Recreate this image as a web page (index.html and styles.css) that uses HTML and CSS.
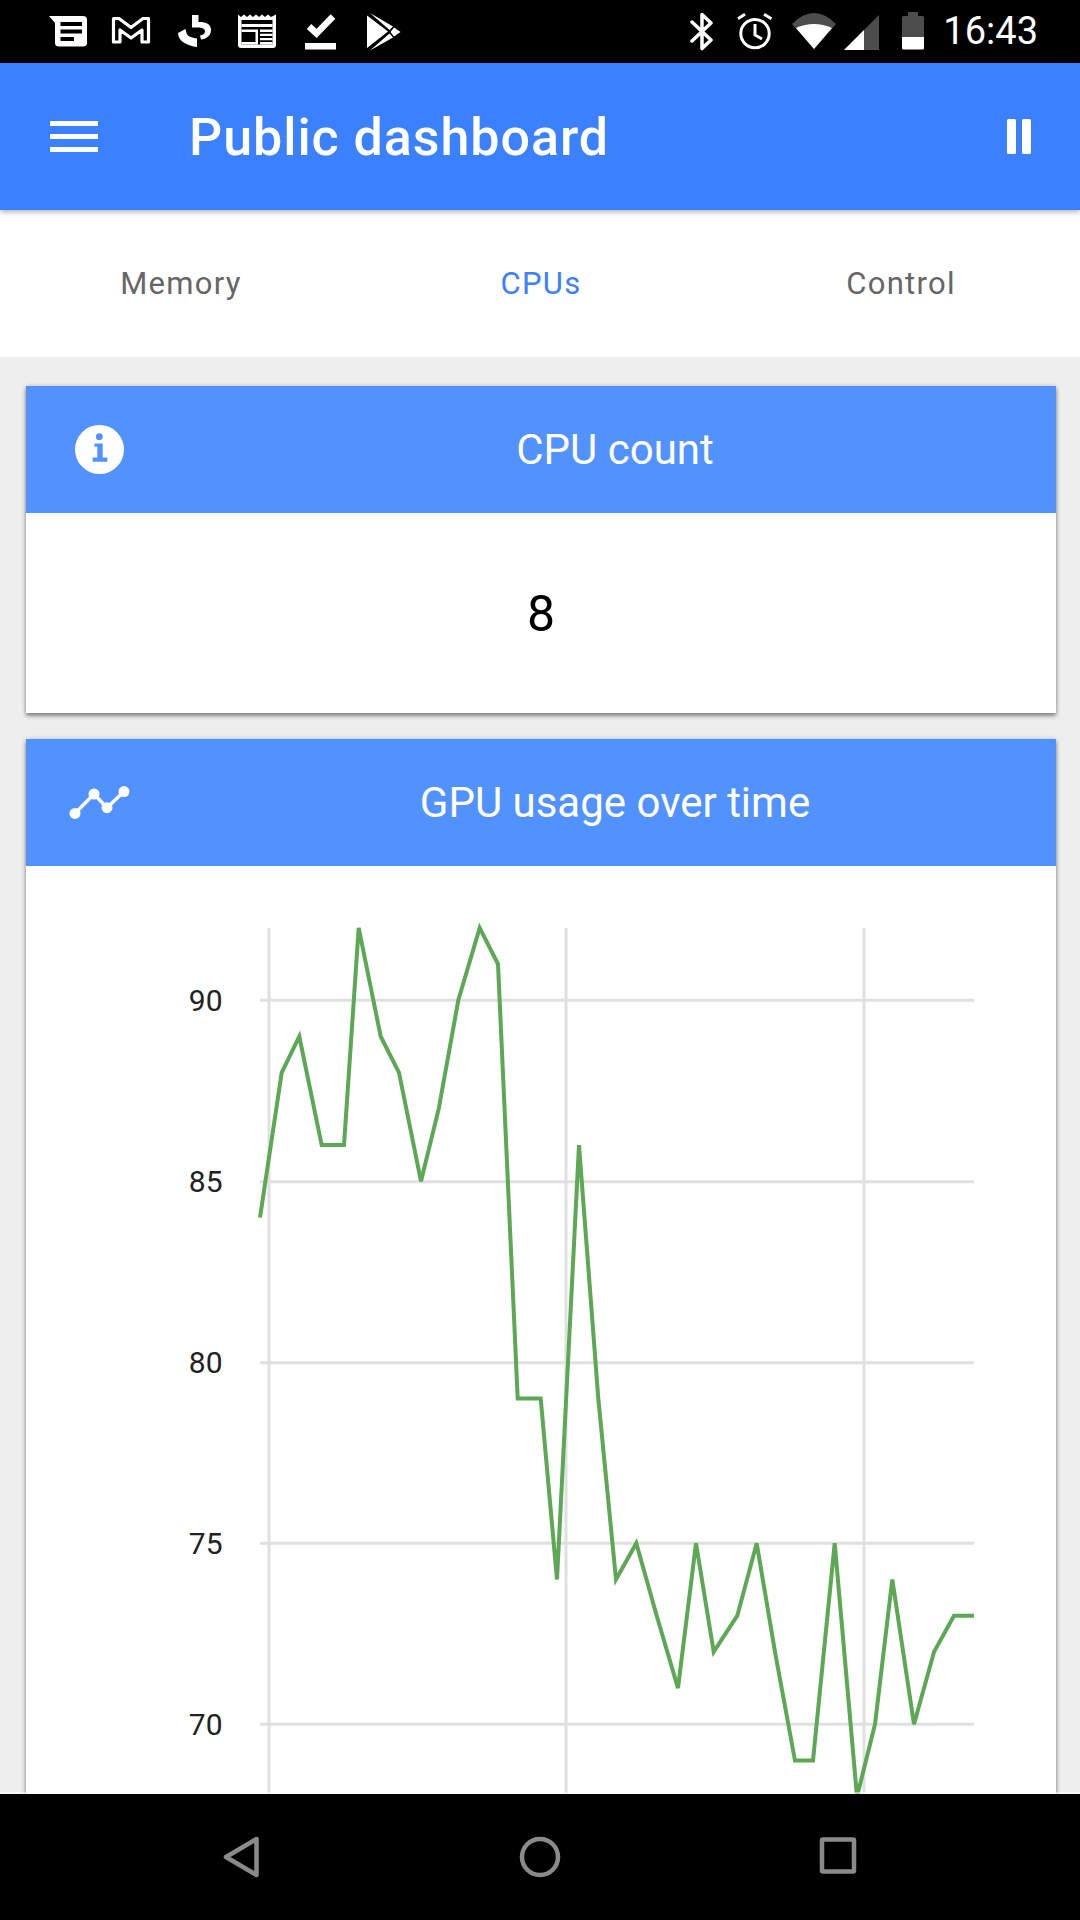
FILE: index.html
```html
<!DOCTYPE html>
<html lang="en">
<head>
<meta charset="utf-8">
<title>Public dashboard</title>
<link rel="stylesheet" href="styles.css">
</head>
<body>
<div class="screen">
  <div class="status">
    <div class="notifs">
      <svg class="slot" viewBox="37 0 63 63"><path class="w" d="M49 16H83Q87 16 87 20V43Q87 46.500 83 46.500H59Q55 46.500 55 43V23Z"/><path class="k" d="M60.500 22H82V26H60.500ZM60.500 29.500H82V33.500H60.500ZM60.500 37H74V41H60.500Z"/></svg>
      <svg class="slot" viewBox="100 0 63 63"><path class="ol" d="M113.500 18.500H119L131 27.500L143 18.500H148.500V42H142V30L131 38L120 30V42H113.500Z"/></svg>
      <svg class="slot" viewBox="163 0 63 63"><path class="w" d="M192 15H198.500V22C205 22 211 23.500 211 30C211 36 206 39 201 39.500L200 35.500C203 35.200 205 33.500 205 31.500C205 28.500 202 27.500 198 27.500H192Z"/><path class="w" d="M185.500 29L186.500 33C187 36 192 38 197 38.500V47C188 46 178 41.500 178 33Z"/></svg>
      <svg class="slot" viewBox="226 0 63 63"><path class="w" d="M238 14.500L241 17L244 14.500L247 17L250 14.500L253 17L256 14.500L259 17L262 14.500L265 17L268 14.500L271 17L276 14.500V45Q276 48 273 48H241Q238 48 238 45Z"/><path class="k" d="M241.500 20H272.500V44.500H241.500Z"/><path class="w" d="M241.500 24H272.500V27H241.500ZM241.500 29.500H257V32H241.500ZM241.500 42H257V44.500H241.500ZM255.500 29.500H258V44.500H255.500ZM260 29.500H272.500V32H260ZM260 33.700H272.500V36H260ZM260 38H272.500V40.200H260ZM260 42H272.500V44.500H260Z"/></svg>
      <svg class="slot" viewBox="289 0 63 63"><path class="w" d="M305 43H336V49.500H305Z"/><path class="st" d="M309 26.500L316.500 33.500L333 16.500"/></svg>
      <svg class="slot" viewBox="352 0 63 63"><path class="w" d="M367 15.500L388 31.500L367 48Z"/><path class="w" d="M370 13L393 26.500L389.500 30ZM370 50.500L393 37.500L389.500 33.500Z"/><path class="w" d="M394 27.500L400.500 32L394 36.500L390.500 32Z"/></svg>
    </div>
    <div class="sysicons">
      <svg class="bt" viewBox="690 0 24 63"><path class="bts" d="M692 22L711 40L702 48.500V14.500L711 23L692 41"/></svg>
      <svg class="alarm" viewBox="737 0 36 63"><circle class="ths" cx="755" cy="33.600" r="14.200"/><path class="ths" d="M755 24V35L762 39M738 18.700L745 14.300M764 14.300L771.500 18.700"/></svg>
      <svg class="wifi" viewBox="792 0 44 63"><path class="g" d="M814 49L792 24Q814 2 836 24Z"/><path class="w" d="M814 49L796 28Q814 20 832 28Z"/></svg>
      <svg class="signal" viewBox="844 0 35 63"><path class="g" d="M844 50L879 15V50Z"/><path class="w" d="M844 50L864 30V50Z"/></svg>
      <svg class="battery" viewBox="902 0 22 63"><path class="g" d="M908 12H918V16H922.500Q924 16 924 17.500V37H902V17.500Q902 16 903.500 16H908Z"/><path class="w" d="M902 37H924V48Q924 49.500 922.500 49.500H903.500Q902 49.500 902 48Z"/></svg>
      <span class="time">16:43</span>
    </div>
  </div>

  <header class="appbar">
    <div class="burger"><i></i><i></i><i></i></div>
    <h1 class="title">Public dashboard</h1>
    <div class="pause"><i></i><i></i></div>
  </header>

  <nav class="tabs">
    <a class="tab">Memory</a>
    <a class="tab active">CPUs</a>
    <a class="tab">Control</a>
  </nav>

  <main class="content">
    <section class="card">
      <div class="card-head">
        <svg class="card-icon" viewBox="0 0 148 127"><circle class="icw" cx="73.500" cy="63.500" r="24.500"/><circle class="icb" cx="73.300" cy="50.700" r="3.400"/><path class="icb" d="M68.500 57.500H76.700V71.500H81.300V75.700H66.700V71.500H71.300V60.700H68.500Z"/></svg>
        <h2 class="card-title">CPU count</h2>
      </div>
      <div class="count">8</div>
    </section>

    <section class="card">
      <div class="card-head">
        <svg class="card-icon" viewBox="0 0 148 127"><path class="icl" d="M49 74.400L68 55L81 68.700L98 52.600"/><circle class="icw" cx="49" cy="74.400" r="5.500"/><circle class="icw" cx="68" cy="55" r="5.500"/><circle class="icw" cx="81" cy="68.700" r="5.500"/><circle class="icw" cx="98" cy="52.600" r="5.500"/></svg>
        <h2 class="card-title">GPU usage over time</h2>
      </div>
      <svg class="chart" viewBox="26 866 1030 960">
        <path class="grid" d="M260 1000.300H974M260 1181.700H974M260 1362.700H974M260 1543.300H974M260 1724.300H974M269 928V1826M566 928V1826M864 928V1826"/>
        <text class="tick" x="222.500" y="1010.800">90</text>
        <text class="tick" x="222.500" y="1191.800">85</text>
        <text class="tick" x="222.500" y="1372.800">80</text>
        <text class="tick" x="222.500" y="1553.800">75</text>
        <text class="tick" x="222.500" y="1734.800">70</text>
        <polyline class="series" points="260,1217.500 281.700,1072.700 299.300,1036.500 321.700,1145.100 344,1145.100 358.700,927.900 380.700,1036.500 399,1072.700 421,1181.300 438.700,1108.900 458.300,1000.300 479.700,927.900 498,964.100 517.700,1398.500 540.700,1398.500 557,1579.500 579,1145.100 598.300,1398.500 616,1579.500 636.300,1543.300 656.700,1615.700 678,1688.100 696,1543.300 713.700,1651.900 737.300,1615.700 756.700,1543.300 775,1651.900 795,1760.500 813,1760.500 834.700,1543.300 857,1796.700 875,1724.300 892.300,1579.500 914,1724.300 934,1651.900 954,1615.700 974,1615.700"/>
      </svg>
    </section>
  </main>

  <footer class="navbar">
    <svg class="nav-icon" viewBox="0 0 1080 126"><path class="nv" d="M256.500 45V81L226 63Z"/><circle class="nv" cx="540" cy="63" r="18"/><rect class="nv" x="822" y="45.500" width="32" height="32" rx="1"/></svg>
  </footer>
</div>
</body>
</html>
```
FILE: styles.css
```css
* { box-sizing: border-box; }
html, body { margin: 0; padding: 0; }
body { font-family: Roboto, "Noto Sans", sans-serif; background: #000; }
.screen { width: 1080px; height: 1920px; display: flex; flex-direction: column; overflow: hidden; }

.status { height: 63px; flex: none; background: #000; display: flex; align-items: center; justify-content: space-between; padding-left: 37px; padding-right: 42px; }
.notifs { display: flex; }
.slot { width: 63px; height: 63px; display: block; }
.sysicons { display: flex; align-items: center; }
.sysicons svg { height: 63px; display: block; flex: none; }
.bt { width: 24px; margin-right: 23px; }
.alarm { width: 36px; margin-right: 19px; }
.wifi { width: 44px; margin-right: 8px; }
.signal { width: 35px; margin-right: 23px; }
.battery { width: 22px; margin-right: 19px; }
.time { color: #fff; font-size: 38px; line-height: 63px; }

.w { fill: #fff; }
.k { fill: #000; }
.g { fill: #4d4d4d; }
.ol { fill: none; stroke: #fff; stroke-width: 3.200; stroke-linejoin: round; }
.st { fill: none; stroke: #fff; stroke-width: 6.500; }
.bts { fill: none; stroke: #fff; stroke-width: 3.500; stroke-linecap: round; stroke-linejoin: round; }
.ths { fill: none; stroke: #fff; stroke-width: 3; }

.appbar { height: 147px; flex: none; background: #3b80ff; display: flex; align-items: center; padding-left: 50px; padding-right: 49px; position: relative; box-shadow: 0 2px 5px rgba(0, 0, 0, .3); }
.burger { width: 48px; margin-right: 91px; display: flex; flex-direction: column; gap: 8px; }
.burger i { display: block; height: 5px; background: #fff; }
.title { margin: 0; flex: 1; font-size: 52px; line-height: 60px; padding-top: 2px; font-weight: 500; color: #fff; letter-spacing: .95px; }
.pause { display: flex; gap: 6px; }
.pause i { display: block; width: 9px; height: 35px; background: #fff; border-radius: 1.500px; }

.tabs { height: 147px; flex: none; background: #fff; display: flex; }
.tab { flex: 1; display: flex; align-items: center; justify-content: center; padding-left: 2px; font-size: 31px; color: #666; letter-spacing: 1.300px; }
.tab.active { color: #3b80ff; }

.content { flex: 1; min-height: 0; background: #eee; overflow: hidden; padding: 29px 24px 0 26px; display: flex; flex-direction: column; gap: 26px; }
.card { flex: none; background: #fff; box-shadow: 0 3px 4px rgba(0, 0, 0, .4), 0 0 5px rgba(0, 0, 0, .18); }
.card-head { height: 127px; background: #5292ff; display: flex; align-items: center; }
.card-icon { width: 148px; height: 127px; flex: none; display: block; }
.card-title { margin: 0; flex: 1; text-align: center; font-size: 42px; font-weight: 400; color: #fff; }
.icw { fill: #fff; }
.icb { fill: #5292ff; }
.icl { fill: none; stroke: #fff; stroke-width: 3.500; }
.count { height: 200px; padding-top: 2px; display: flex; align-items: center; justify-content: center; font-size: 50px; color: #000; }

.chart { display: block; width: 1030px; height: 960px; }
.grid { fill: none; stroke: #e0e0e0; stroke-width: 3; }
.tick { font-size: 30px; fill: #222; text-anchor: end; }
.series { fill: none; stroke: #5ca854; stroke-width: 4; stroke-linejoin: miter; }

.navbar { height: 126px; flex: none; background: #000; position: relative; box-shadow: 0 -2px 0 rgba(255, 255, 255, .5); }
.nav-icon { width: 1080px; height: 126px; display: block; }
.nv { fill: none; stroke: #8a8a8a; stroke-width: 4.500; stroke-linejoin: round; }
```
